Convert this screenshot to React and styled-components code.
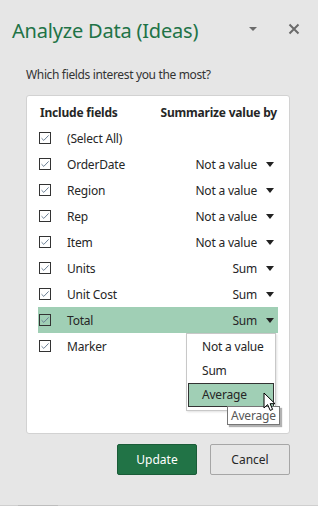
import React from "react";
import styled, { createGlobalStyle } from "styled-components";

const GlobalStyle = createGlobalStyle`
  html, body {
    margin: 0;
    padding: 0;
    background: #e6e6e6;
  }
  body {
    font-family: "Segoe UI", "Noto Sans", "Open Sans", sans-serif;
    color: #262626;
  }
`;

const fields = [
  { name: "(Select All)", value: null },
  { name: "OrderDate", value: "Not a value" },
  { name: "Region", value: "Not a value" },
  { name: "Rep", value: "Not a value" },
  { name: "Item", value: "Not a value" },
  { name: "Units", value: "Sum" },
  { name: "Unit Cost", value: "Sum" },
  { name: "Total", value: "Sum", active: true },
  { name: "Marker", value: null },
];

const options = ["Not a value", "Sum", "Average"];

export default function App() {
  return (
    <>
      <GlobalStyle />
      <Pane>
        <Header>
          <Title>Analyze Data (Ideas)</Title>
          <HeaderIcons>
            <svg width="10" height="6" viewBox="0 0 10 6">
              <path d="M1 1h8L5 5z" fill="#6b6b6b" />
            </svg>
            <svg width="12" height="12" viewBox="0 0 12 12">
              <path d="M1.5 1.5l9 9M10.5 1.5l-9 9" stroke="#6b6b6b" strokeWidth="2" />
            </svg>
          </HeaderIcons>
        </Header>
        <Prompt>Which fields interest you the most?</Prompt>
        <FieldsCard>
          <ColumnHeads>
            <span>Include fields</span>
            <span>Summarize value by</span>
          </ColumnHeads>
          {fields.map((f) => (
            <FieldRow key={f.name} $active={f.active}>
              <CheckBox>
                <svg width="10" height="10" viewBox="0 0 10 10">
                  <path d="M1.5 5.2l2.3 2.2L8.6 2.4" stroke="#6a7f95" strokeWidth="1" fill="none" />
                </svg>
              </CheckBox>
              <FieldName>{f.name}</FieldName>
              {f.value && (
                <>
                  <FieldValue>{f.value}</FieldValue>
                  <Caret />
                </>
              )}
            </FieldRow>
          ))}
          <Menu>
            {options.map((o) => (
              <MenuItem key={o} $selected={o === "Average"}>
                {o}
              </MenuItem>
            ))}
          </Menu>
          <Tooltip>Average</Tooltip>
          <Pointer width="14" height="20" viewBox="0 0 14 20">
            <path
              d="M1 1v15l3.6-3.4 2.6 5.8 2.4-1-2.5-5.7H12z"
              fill="#fff"
              stroke="#000"
              strokeWidth="1"
              strokeLinejoin="round"
            />
          </Pointer>
        </FieldsCard>
        <Footer>
          <Button $primary>Update</Button>
          <Button>Cancel</Button>
        </Footer>
        <BottomEdge>
          <ScrollThumb />
        </BottomEdge>
      </Pane>
    </>
  );
}

const Pane = styled.div`
  width: 318px;
  height: 506px;
  display: flex;
  flex-direction: column;
  box-sizing: border-box;
`;

const Header = styled.div`
  display: flex;
  align-items: center;
  justify-content: space-between;
  height: 32px;
  padding: 14px 18px 0 12px;
`;

const Title = styled.h1`
  margin: 0;
  font-size: 20px;
  font-weight: 400;
  color: #217346;
  letter-spacing: -0.2px;
`;

const HeaderIcons = styled.div`
  display: flex;
  align-items: center;
  gap: 30px;
  margin-top: -3px;
`;

const Prompt = styled.div`
  font-size: 12px;
  letter-spacing: -0.35px;
  color: #333;
  padding: 20px 0 0 26px;
  height: 29px;
`;

const FieldsCard = styled.div`
  position: relative;
  margin: 0 28px 0 26px;
  height: 334px;
  padding: 3px 11px 0;
  background: #fff;
  border: 1px solid #d2d2d2;
  border-radius: 3px;
  font-size: 12px;
  letter-spacing: -0.2px;
`;

const ColumnHeads = styled.div`
  display: flex;
  justify-content: space-between;
  align-items: center;
  height: 26px;
  padding: 0 1px 0 2px;
  font-weight: 700;
  color: #262626;
`;

const FieldRow = styled.div`
  display: flex;
  align-items: center;
  height: 26px;
  padding: 0 4px 0 1px;
  background: ${(p) => (p.$active ? "#a0cfb5" : "transparent")};
`;

const CheckBox = styled.span`
  width: 12px;
  height: 12px;
  box-sizing: border-box;
  border: 1px solid #333;
  display: flex;
  align-items: center;
  justify-content: center;
  margin-right: 16px;
`;

const FieldName = styled.span`
  flex: 1;
  color: #262626;
`;

const FieldValue = styled.span`
  color: #262626;
  margin-right: 9px;
`;

const Caret = styled.span`
  width: 0;
  height: 0;
  border-left: 4px solid transparent;
  border-right: 4px solid transparent;
  border-top: 5px solid #222;
`;

const Menu = styled.div`
  position: absolute;
  left: 159px;
  top: 237px;
  width: 90px;
  box-sizing: border-box;
  padding: 1px 1px 3px;
  background: #fff;
  border: 1px solid #c8c8c8;
  box-shadow: 1px 1px 2px rgba(0, 0, 0, 0.12);
  z-index: 1;
`;

const MenuItem = styled.div`
  height: 24px;
  line-height: 22px;
  box-sizing: border-box;
  padding-left: 13px;
  font-size: 12px;
  color: #262626;
  border: 1px solid ${(p) => (p.$selected ? "#333" : "transparent")};
  background: ${(p) => (p.$selected ? "#a0cfb5" : "transparent")};
`;

const Tooltip = styled.div`
  position: absolute;
  left: 200px;
  top: 310px;
  padding: 0 3px;
  height: 19px;
  line-height: 17px;
  box-sizing: border-box;
  background: #fff;
  border: 1px solid #767676;
  box-shadow: 2px 2px 1px rgba(0, 0, 0, 0.3);
  font-size: 12px;
  color: #575757;
  z-index: 2;
`;

const Pointer = styled.svg`
  position: absolute;
  left: 236px;
  top: 296px;
  z-index: 3;
`;

const Footer = styled.div`
  display: flex;
  justify-content: flex-end;
  gap: 13px;
  padding: 10px 28px 0 0;
  flex: 1;
`;

const Button = styled.button`
  width: 80px;
  height: 31px;
  font-family: inherit;
  font-size: 12px;
  border-radius: 2px;
  border: 1px solid ${(p) => (p.$primary ? "#1a5c38" : "#a6a6a6")};
  background: ${(p) => (p.$primary ? "#217346" : "#e6e6e6")};
  color: ${(p) => (p.$primary ? "#fff" : "#262626")};
`;

const BottomEdge = styled.div`
  height: 1px;
  background: #cfcfcf;
  padding-left: 18px;
`;

const ScrollThumb = styled.div`
  width: 40px;
  height: 1px;
  background: #bdbdbd;
`;
